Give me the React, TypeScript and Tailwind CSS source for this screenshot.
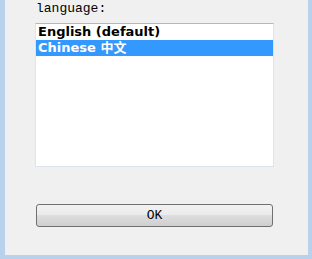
export default function App() {
  return (
    <div className="w-[312px] h-[259px] bg-[#b9d1ea] pl-[5px] pr-[4px] pb-[4px] flex">
      <div className="flex-1 bg-[#f0f0f0] flex flex-col">
        <div
          className="h-[23px] pt-[2px] pl-[31px] text-[13px] leading-[14px] text-black"
          style={{ fontFamily: '"Liberation Mono", monospace' }}
        >
          language:
        </div>
        <div className="ml-[30px] w-[239px] h-[144px] bg-white border-t border-t-[#b7b7b7] border-l border-l-[#e3e3e3] border-r border-r-[#dde3ea] border-b border-b-[#dde3ea] flex flex-col">
          <div
            className="h-[16px] pl-[2px] text-[13px] leading-[16px] font-bold text-black"
            style={{ fontFamily: 'Tahoma, "DejaVu Sans", "Noto Sans CJK SC", sans-serif' }}
          >
            English (default)
          </div>
          <div
            className="h-[16px] pl-[2px] text-[13px] leading-[16px] font-bold text-white bg-[#3399ff]"
            style={{ fontFamily: 'Tahoma, "DejaVu Sans", "Noto Sans CJK SC", sans-serif' }}
          >
            Chinese 中文
          </div>
        </div>
        <div className="mt-[37px] ml-[31px] w-[237px] h-[23px] rounded-[3px] border border-[#707070] bg-[linear-gradient(to_bottom,#f2f2f2_0%,#ebebeb_45%,#dddddd_50%,#cfcfcf_100%)] flex items-center justify-center">
          <span
            className="text-[13px] leading-[16px] text-black"
            style={{ fontFamily: '"Liberation Mono", monospace' }}
          >
            OK
          </span>
        </div>
      </div>
    </div>
  );
}
